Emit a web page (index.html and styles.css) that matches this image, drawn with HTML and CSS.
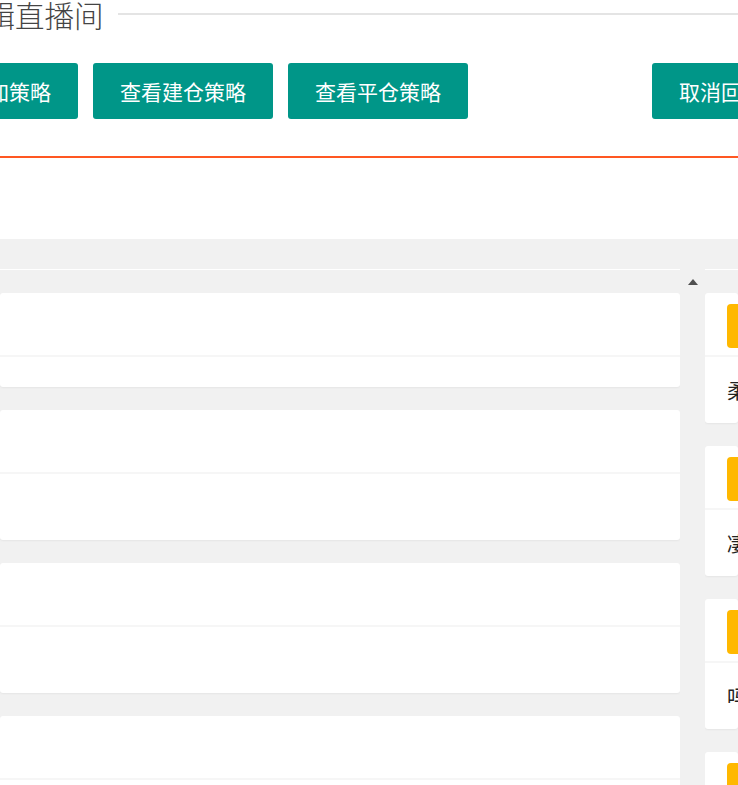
FILE: index.html
```html
<!DOCTYPE html>
<html lang="zh-CN">
<head>
<meta charset="utf-8">
<title>编辑直播间</title>
<link rel="stylesheet" href="styles.css">
</head>
<body>
<div class="page">
  <div class="title-row">
    <span class="title">编辑直播间</span>
    <span class="title-line"></span>
  </div>
  <div class="btn-row">
    <button class="btn btn-add">添加策略</button>
    <button class="btn">查看建仓策略</button>
    <button class="btn">查看平仓策略</button>
    <button class="btn btn-cancel">取消回放</button>
  </div>
  <div class="tab-line"></div>
  <div class="board">
    <div class="board-head"></div>
    <div class="board-body">
      <div class="list">
        <div class="card"><div class="card-head"></div><div class="card-body"></div></div>
        <div class="card"><div class="card-head"></div><div class="card-body tall"></div></div>
        <div class="card"><div class="card-head"></div><div class="card-body tall"></div></div>
        <div class="card"><div class="card-head"></div><div class="card-body tall"></div></div>
      </div>
      <div class="scrollbar"><span class="arrow-up"></span></div>
      <div class="side">
        <div class="card"><div class="card-head"><span class="badge">用户</span></div><div class="card-body">柔柔弱弱的老师</div></div>
        <div class="card"><div class="card-head"><span class="badge">用户</span></div><div class="card-body">凄凄惨惨戚戚</div></div>
        <div class="card"><div class="card-head"><span class="badge">用户</span></div><div class="card-body">吗？今天怎么看</div></div>
        <div class="card"><div class="card-head"><span class="badge">用户</span></div><div class="card-body">好的</div></div>
      </div>
    </div>
  </div>
</div>
</body>
</html>
```
FILE: styles.css
```css
html, body {
  margin: 0;
  padding: 0;
  overflow: hidden;
  background: #fff;
}
body {
  font-family: "Noto Sans CJK SC", "Noto Sans", sans-serif;
  color: #333;
}
.page {
  width: 738px;
  height: 785px;
}
.title-row {
  display: flex;
  align-items: center;
  height: 28px;
  margin-left: -44px;
}
.title {
  font-size: 29.5px;
  line-height: 28px;
  font-weight: 300;
  color: #444;
  white-space: nowrap;
}
.title-line {
  flex: 1;
  height: 2px;
  background: #e4e4e4;
  margin-left: 14px;
}
.btn-row {
  display: flex;
  gap: 15px;
  margin-top: 35px;
  margin-left: -60px;
  white-space: nowrap;
}
.btn {
  flex: none;
  height: 56px;
  padding: 0 27px;
  border: 0;
  border-radius: 3px;
  background: #009688;
  color: #fff;
  font-family: inherit;
  font-size: 21px;
  line-height: 56px;
}
.btn-cancel {
  margin-left: 169px;
}
.tab-line {
  margin-top: 37px;
  height: 2px;
  background: #ff5722;
}
.board {
  margin-top: 81px;
  background: #f1f1f1;
  height: 600px;
}
.board-head {
  height: 30px;
}
.board-body {
  display: flex;
  height: 100%;
}
.list {
  flex: 0 0 680px;
  border-top: 1px solid #fff;
  padding-top: 23px;
  overflow: hidden;
}
.scrollbar {
  flex: 0 0 25px;
  display: flex;
  justify-content: center;
  padding-top: 10px;
  box-sizing: border-box;
  background: #f1f1f1;
}
.arrow-up {
  width: 0;
  height: 0;
  border-left: 5px solid transparent;
  border-right: 5px solid transparent;
  border-bottom: 6px solid #505050;
}
.side {
  flex: 1;
  border-top: 1px solid #fff;
  padding-top: 23px;
  overflow: hidden;
}
.card {
  background: #fff;
  border-radius: 3px;
  box-shadow: 0 1px 2px rgba(0, 0, 0, 0.05);
  margin-bottom: 23px;
}
.card-head {
  height: 64px;
  border-bottom: 2px solid #f6f6f6;
  padding: 11px 22px 0;
  box-sizing: border-box;
}
.card-body {
  padding: 15px 22px;
  font-size: 20.5px;
  line-height: 36px;
  color: #222;
  white-space: nowrap;
}
.card-body:empty {
  height: 0;
}
.card-body.tall {
  height: 36px;
}
.badge {
  display: inline-block;
  height: 44px;
  padding: 0 20px;
  border-radius: 4px;
  background: #ffb800;
  color: #fff;
  font-size: 18px;
  line-height: 44px;
}
```
